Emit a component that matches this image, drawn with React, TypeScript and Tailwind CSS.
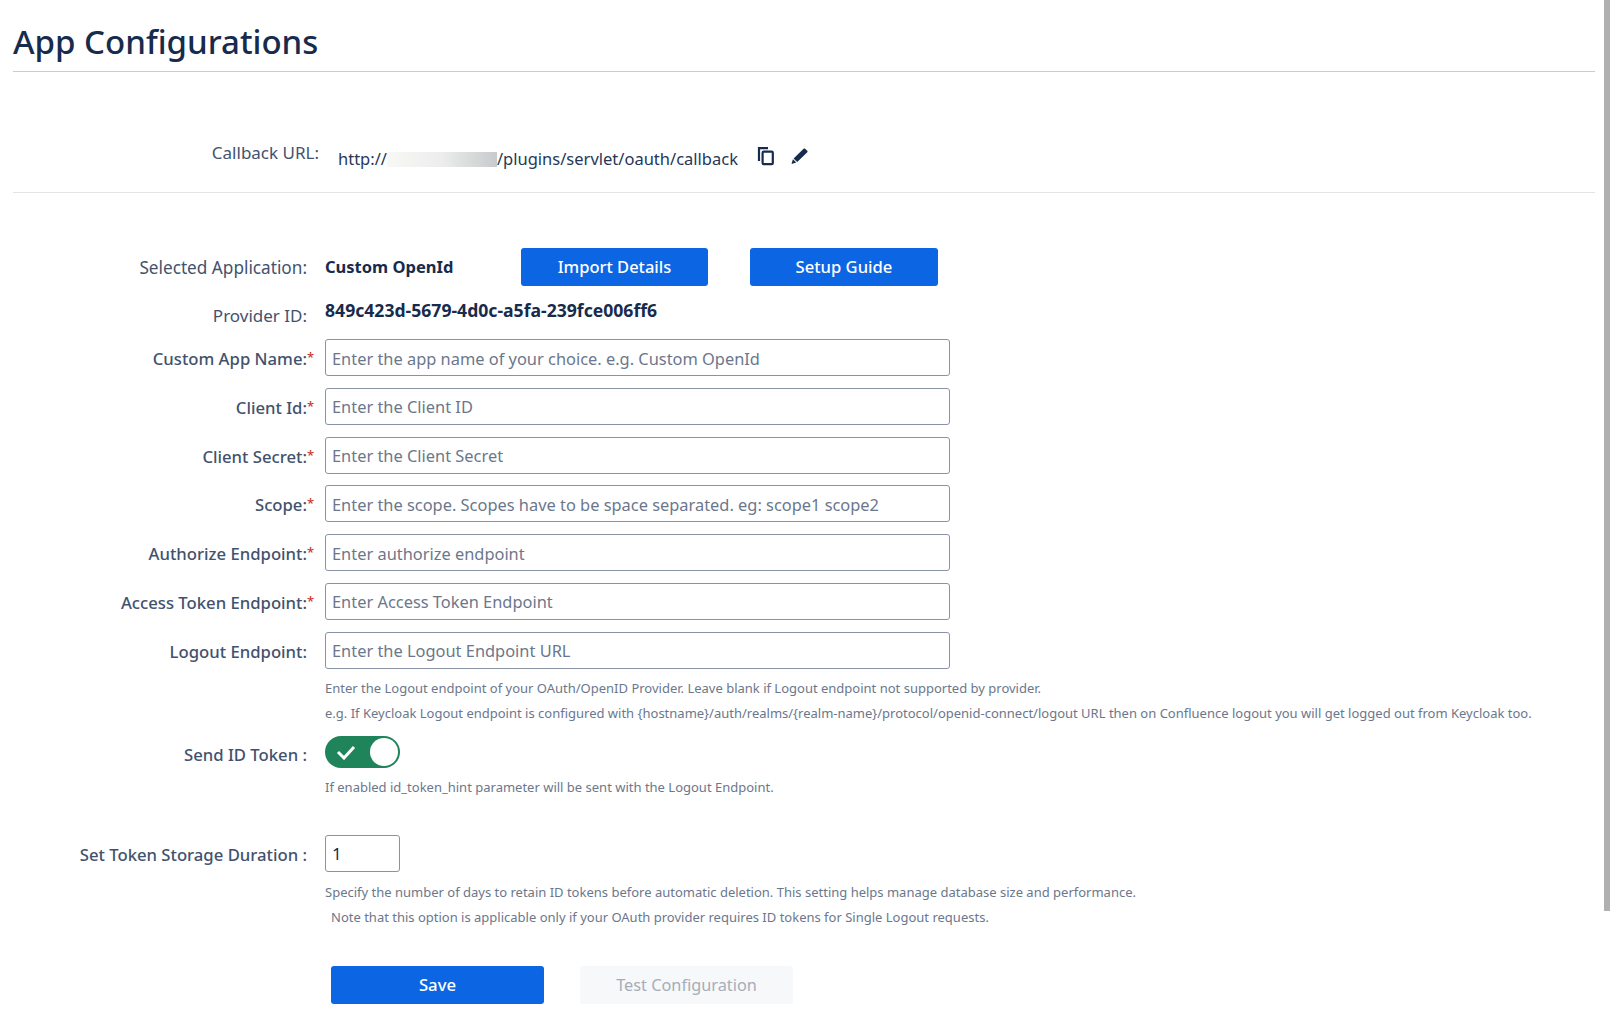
const rows = [
  { label: "Custom App Name:", placeholder: "Enter the app name of your choice. e.g. Custom OpenId", required: true },
  { label: "Client Id:", placeholder: "Enter the Client ID", required: true },
  { label: "Client Secret:", placeholder: "Enter the Client Secret", required: true },
  { label: "Scope:", placeholder: "Enter the scope. Scopes have to be space separated. eg: scope1 scope2", required: true },
  { label: "Authorize Endpoint:", placeholder: "Enter authorize endpoint", required: true },
  { label: "Access Token Endpoint:", placeholder: "Enter Access Token Endpoint", required: true },
  { label: "Logout Endpoint:", placeholder: "Enter the Logout Endpoint URL", required: false },
]

function CopyIcon() {
  return (
    <svg width="18" height="20" viewBox="0 0 18 20" fill="none" stroke="#172b4d" strokeWidth="2.2">
      <path d="M2 15V2.2h9" />
      <rect x="5.6" y="5.6" width="10.2" height="12.6" rx="1.2" />
    </svg>
  )
}

function PencilIcon() {
  return (
    <svg width="17" height="16" viewBox="0 0 17 16" fill="#172b4d">
      <path d="M12.6.7c.5-.4 1.1-.4 1.5 0l2.2 2.1c.4.4.4 1 0 1.4L6.2 13.9 2.6 10.4z" />
      <path d="M1.9 11.3l3.4 3.3-4.8 1.4z" />
    </svg>
  )
}

export default function App() {
  return (
    <div className="relative min-h-[1028px] bg-white pl-[13px] pr-[15px] pt-[17px] font-['Noto_Sans',sans-serif] text-[#42526e]">
      <div className="fixed right-0 top-0 h-[911px] w-[6px] bg-[#b0b0b0]" />

      <h1 className="border-b border-[#cccccc] pb-[5px] text-[33px] font-medium leading-[49px] text-[#172b4d]">App Configurations</h1>

      <div className="flex h-[121px] items-center border-b border-[#e4e4e4] pt-[42px]">
        <div className="w-[306px] text-right text-[17px] leading-6">Callback URL:</div>
        <div className="ml-[19px] mt-[12px] flex text-[16.5px] leading-6 text-[#253858]">
          <span>http://</span>
          <span className="my-auto h-[15px] w-[110px] bg-gradient-to-r from-[#f8f8f6] via-[#ecedec] to-[#c8cacc]" />
          <span>/plugins/servlet/oauth/callback</span>
        </div>
        <div className="ml-[19px] mt-[6px] flex items-center gap-[16px]">
          <CopyIcon />
          <PencilIcon />
        </div>
      </div>

      <div className="mt-[55px] flex h-[38px] items-center">
        <div className="mt-[2px] w-[294px] text-right text-[17.2px]">Selected Application:</div>
        <div className="ml-[18px] w-[196px] text-[16.5px] font-bold text-[#172b4d]">Custom OpenId</div>
        <button className="h-[38px] w-[187px] rounded-[3px] bg-[#0c66e4] text-[16.5px] font-medium text-white">Import Details</button>
        <button className="ml-[42px] h-[38px] w-[188px] rounded-[3px] bg-[#0c66e4] text-[16.6px] font-medium text-white">Setup Guide</button>
      </div>

      <div className="mt-[10px] flex h-[38px] items-center">
        <div className="mt-[2px] w-[294px] text-right text-[17px]">Provider ID:</div>
        <div className="-mt-[10px] ml-[18px] text-[17.6px] font-bold text-[#172b4d]">849c423d-5679-4d0c-a5fa-239fce006ff6</div>
      </div>

      <div className="mt-[5px] flex flex-col gap-[11.8px]">
        {rows.map(row => (
          <div key={row.label} className="flex items-center">
            <div className="mt-[2px] w-[294px] text-right text-[16.7px] font-medium text-[#42526e]">
              {row.label}
              {row.required && <span className="-mr-[7px] inline-block w-[7px] align-[3px] text-[13px] leading-none text-[#c9372c]">*</span>}
            </div>
            <input
              placeholder={row.placeholder}
              className="ml-[18px] h-[37px] w-[625px] rounded-[3px] border border-[#8993a4] px-[6px] pt-[1px] text-[16.4px] text-[#172b4d] outline-none placeholder:text-[#6b778c]"
            />
          </div>
        ))}
      </div>

      <div className="ml-[312px] mt-[7px] text-[13px] leading-[25px] text-[#6b778c]">
        <p>Enter the Logout endpoint of your OAuth/OpenID Provider. Leave blank if Logout endpoint not supported by provider.</p>
        <p>e.g. If Keycloak Logout endpoint is configured with {"{hostname}"}/auth/realms/{"{realm-name}"}/protocol/openid-connect/logout URL then on Confluence logout you will get logged out from Keycloak too.</p>
      </div>

      <div className="mt-[10px] flex items-center">
        <div className="mt-[6px] w-[294px] text-right text-[16.7px] font-medium text-[#42526e]">Send ID Token :</div>
        <div className="ml-[18px] flex h-[32px] w-[75px] items-center justify-between rounded-full bg-[#1f845a] pl-[11px] pr-[2px]">
          <svg width="20" height="16" viewBox="0 0 20 16" fill="none" stroke="white" strokeWidth="3">
            <path d="M2 8l6 6L18 3" />
          </svg>
          <span className="h-[28px] w-[28px] rounded-full bg-white" />
        </div>
      </div>
      <p className="ml-[312px] mt-[7px] text-[13px] leading-[25px] text-[#6b778c]">If enabled id_token_hint parameter will be sent with the Logout Endpoint.</p>

      <div className="mt-[35px] flex items-center">
        <div className="mt-[2px] w-[294px] text-right text-[16.7px] font-medium text-[#42526e]">Set Token Storage Duration :</div>
        <input defaultValue="1" className="ml-[18px] h-[37px] w-[75px] rounded-[3px] border border-[#8993a4] px-[6px] text-[17px] text-[#172b4d] outline-none" />
      </div>

      <div className="ml-[312px] mt-[8px] text-[13px] leading-[25px] text-[#6b778c]">
        <p>Specify the number of days to retain ID tokens before automatic deletion. This setting helps manage database size and performance.</p>
        <p className="ml-[6px]">Note that this option is applicable only if your OAuth provider requires ID tokens for Single Logout requests.</p>
      </div>

      <div className="ml-[318px] mt-[36px] flex gap-[36px]">
        <button className="h-[38px] w-[213px] rounded-[3px] bg-[#0c66e4] text-[16.7px] font-medium text-white">Save</button>
        <button disabled className="h-[38px] w-[213px] rounded-[3px] bg-[#f7f8f9] text-[16.3px] text-[#a5adba]">Test Configuration</button>
      </div>
    </div>
  )
}
